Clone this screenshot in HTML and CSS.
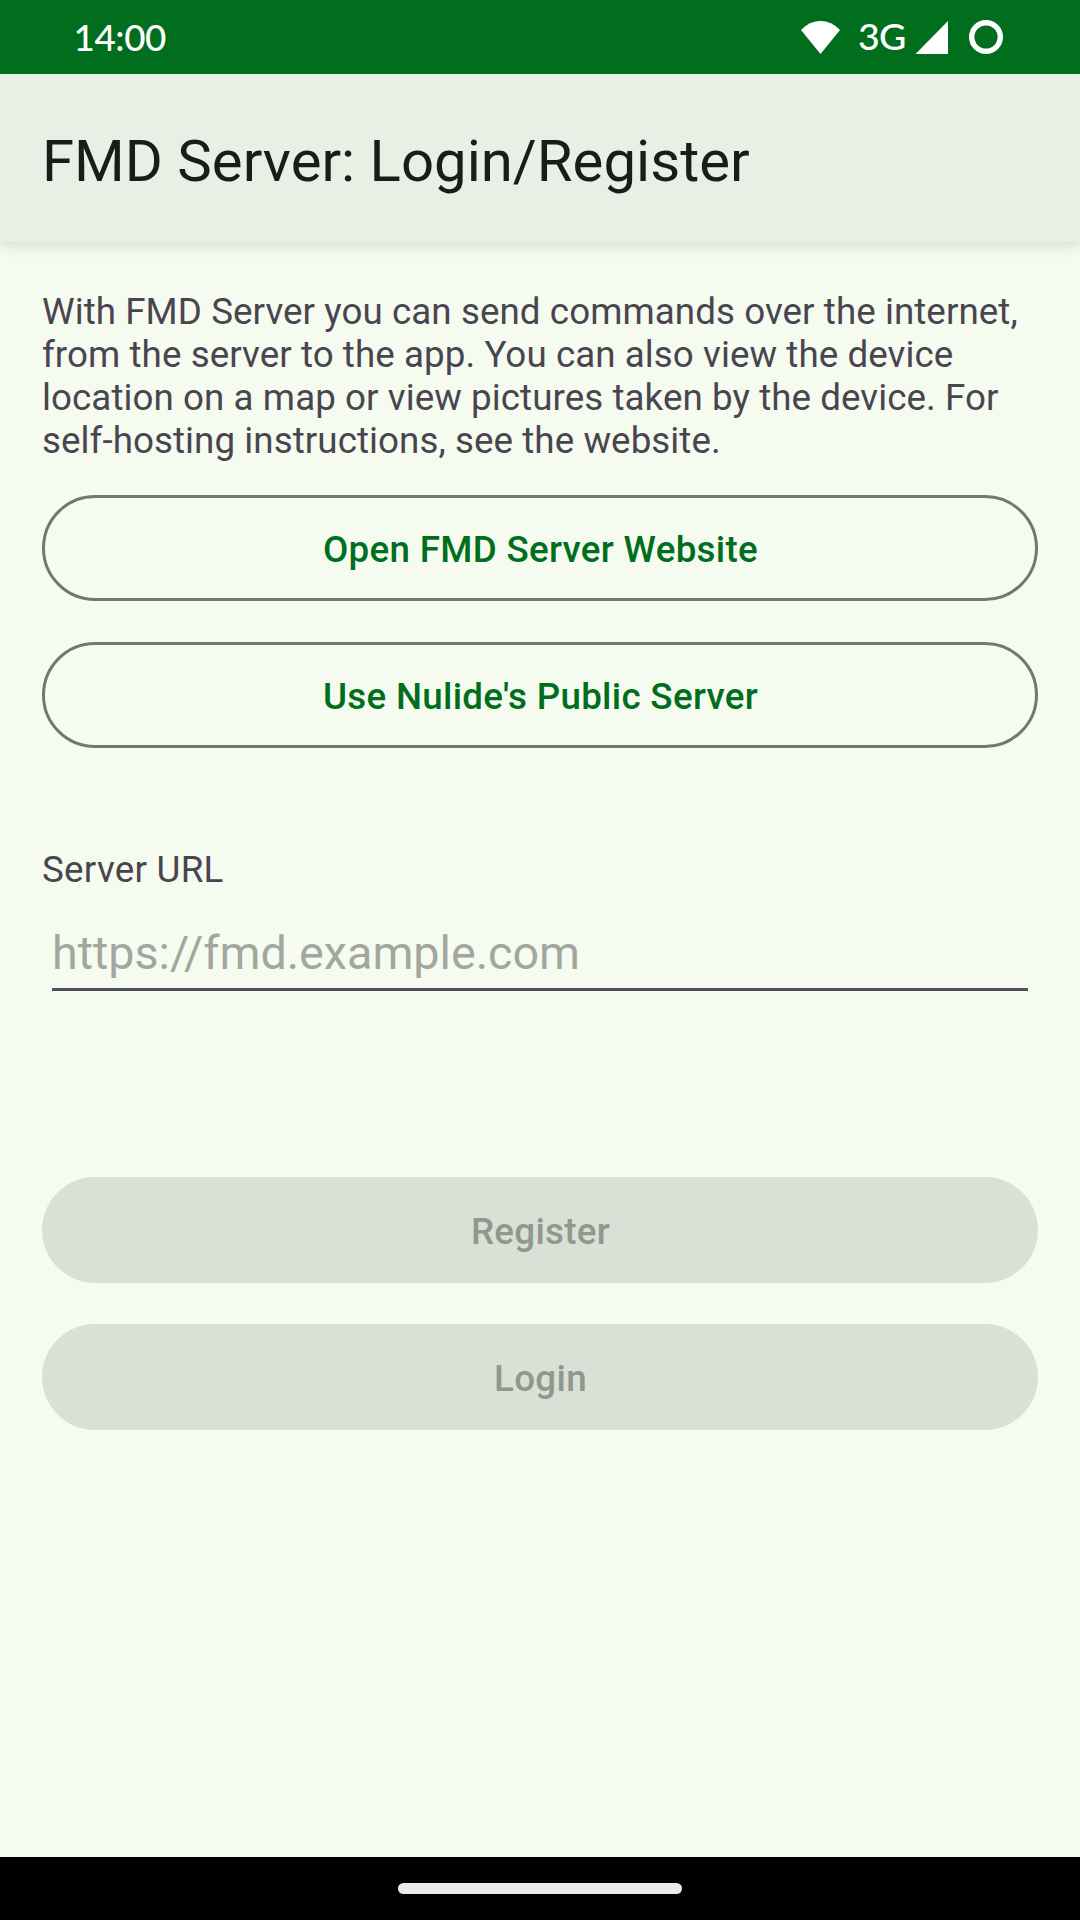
FILE: index.html
```html
<!DOCTYPE html>
<html lang="en">
<head>
<meta charset="utf-8">
<title>FMD Server</title>
<link rel="stylesheet" href="styles.css">
</head>
<body>
<div class="status">
  <span class="clock">14:00</span>
  <div class="indicators">
    <svg class="wifi" width="39" height="33" viewBox="0 0 39 33"><path d="M0 9Q8.500 0 19.500 0T39 9L19.500 33Z" fill="#fff"/></svg>
    <span class="net">3G</span>
    <svg class="signal" width="33" height="33" viewBox="0 0 33 33"><path d="M33 0V33H0.500Z" fill="#fff"/></svg>
    <svg class="ring" width="34" height="34" viewBox="0 0 34 34"><circle cx="17" cy="17" r="14.3" fill="none" stroke="#fff" stroke-width="5.400"/></svg>
  </div>
</div>
<header class="appbar"><h1>FMD Server: Login/Register</h1></header>
<main class="content">
  <p class="intro">With FMD Server you can send commands over the internet,<br>from the server to the app. You can also view the device<br>location on a map or view pictures taken by the device. For<br>self-hosting instructions, see the website.</p>
  <button class="btn outlined">Open FMD Server Website</button>
  <button class="btn outlined">Use Nulide's Public Server</button>
  <label class="label" for="url">Server URL</label>
  <input class="field" id="url" type="text" placeholder="https://fmd.example.com">
  <button class="btn filled first" disabled>Register</button>
  <button class="btn filled" disabled>Login</button>
</main>
<footer class="nav"><div class="handle"></div></footer>
</body>
</html>
```

FILE: styles.css
```css
* { box-sizing: border-box; }
body { margin: 0; width: 1080px; height: 1920px; display: flex; flex-direction: column; overflow: hidden; background: #f6fbf0; font-family: Roboto, sans-serif; }
.status { height: 74px; flex: none; background: #006e1c; color: #fff; display: flex; justify-content: space-between; padding: 0 77px 0 73.5px; z-index: 1; }
.clock { font: 500 36.75px/74px Lato, sans-serif; letter-spacing: -.4px; }
.indicators { display: flex; align-items: center; }
.net { font: 500 37.5px/72px Lato, sans-serif; letter-spacing: -.8px; width: 48px; margin: 0 9px 2px 18px; white-space: nowrap; }
.ring { margin-left: 21px; }
.appbar { height: 168px; flex: none; background: #eaefe5; padding-left: 42px; box-shadow: 0 3px 14px rgba(0,0,0,.14); }
h1 { margin: 0; font-size: 58.1px; line-height: 174px; font-weight: 400; color: #181d17; white-space: nowrap; }
.content { flex: 1; padding: 48px 42px 0; display: flex; flex-direction: column; }
.intro { margin: 0 0 33px; font-size: 36.75px; line-height: 43px; letter-spacing: .065px; color: #49454f; white-space: nowrap; }
.btn { height: 106px; flex: none; border: 0; border-radius: 53px; font: 500 36.75px Roboto, sans-serif; padding: 2px 0 0 1px; letter-spacing: .3px; }
.btn + .btn { margin-top: 41px; }
.outlined { border: 3px solid #72796b; background: transparent; color: #006e1c; }
.label { margin-top: 100px; font-size: 36.75px; line-height: 43px; letter-spacing: .27px; color: #49454f; }
.field { margin: 23px 10px 0; height: 77px; flex: none; border: 0; border-bottom: 3px solid #534e58; padding: 3px 0 0; background: transparent; font: 400 46.7px Roboto, sans-serif; outline: 0; }
.field::placeholder { color: #a3a69f; opacity: 1; }
.filled { background: #dae0d5; color: #91978c; }
.btn.first { margin-top: 186px; }
.nav { height: 63px; flex: none; background: #000; display: flex; align-items: center; justify-content: center; }
.handle { width: 284px; height: 11px; border-radius: 5.5px; background: #ebebeb; }
```
